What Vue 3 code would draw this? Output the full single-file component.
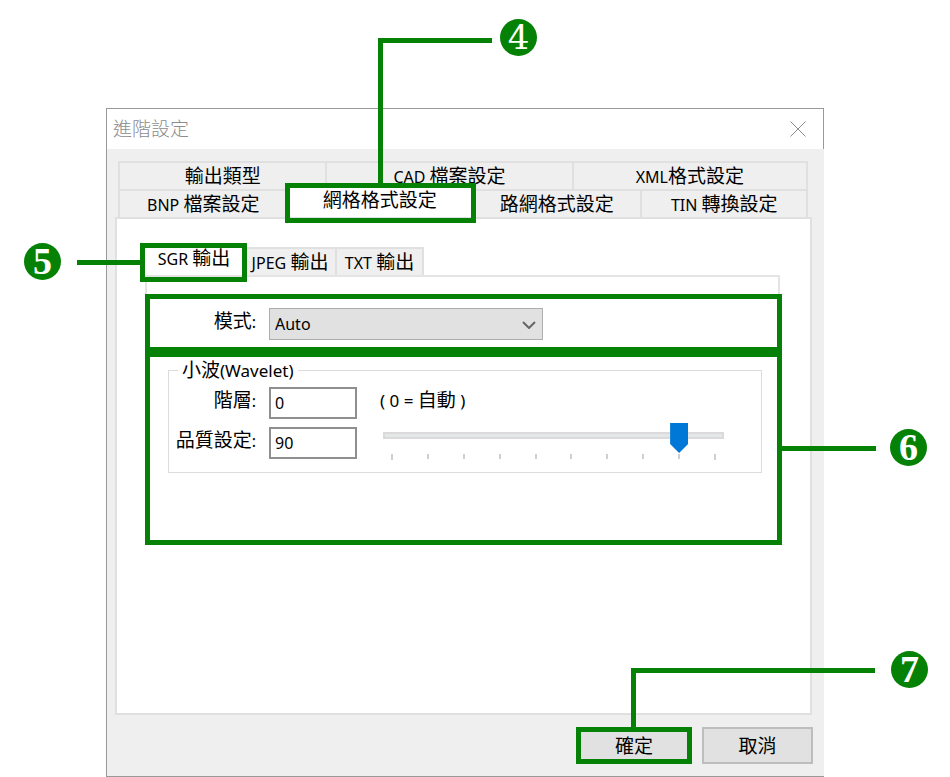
<template>
  <div class="page">
    <div class="dialog" role="dialog" aria-labelledby="dialog-title">
      <header class="title-bar">
        <h1 id="dialog-title">進階設定</h1>
        <button class="close" type="button" aria-label="關閉">
          <svg width="16" height="16" viewBox="0 0 16 16">
            <path d="M0.5 0.5L15.5 15.5M15.5 0.5L0.5 15.5" fill="none" stroke="#8c8c8c" />
          </svg>
        </button>
      </header>

      <!-- 外層分頁，共兩列 -->
      <nav class="tabs">
        <div class="tab-row first">
          <button v-for="tab in topTabs" :key="tab.name" class="tab" type="button">
            <span class="en">{{ tab.en }}</span>{{ tab.name }}
          </button>
        </div>
        <div class="tab-row second">
          <button
            v-for="tab in bottomTabs"
            :key="tab.name"
            class="tab"
            :class="{ active: tab.name === activeTab }"
            type="button"
            @click="activeTab = tab.name"
          >
            <span class="en">{{ tab.en }}</span>{{ tab.name }}
          </button>
          <!-- 標註 4 -->
          <div class="mark mark-tab">
            <span class="line v line-4v"></span>
            <span class="line h line-4h"></span>
            <span class="badge badge-4">4</span>
          </div>
        </div>
      </nav>

      <main class="panel">
        <!-- 內層分頁 -->
        <nav class="sub-tabs">
          <button
            v-for="tab in subTabs"
            :key="tab"
            class="tab"
            :class="{ active: tab === activeSubTab }"
            type="button"
            @click="activeSubTab = tab"
          >
            <span class="en">{{ tab }}&nbsp;</span>輸出
          </button>
          <!-- 標註 5 -->
          <div class="mark mark-sub">
            <span class="line h line-5"></span>
            <span class="badge badge-5">5</span>
          </div>
        </nav>

        <div class="sub-panel">
          <section class="box mode">
            <label for="mode">模式<span class="en">:</span></label>
            <div class="select">
              <select id="mode" v-model="mode">
                <option>Auto</option>
              </select>
              <svg width="14" height="8" viewBox="0 0 14 8">
                <path d="M1 1L7 7L13 1" fill="none" stroke="#666" stroke-width="2" />
              </svg>
            </div>
          </section>

          <section class="box wavelet">
            <fieldset>
              <legend>小波<span class="en">(Wavelet)</span></legend>
              <div class="fields">
                <label for="level">階層<span class="en">:</span></label>
                <input id="level" v-model="level" type="text" />
                <span class="hint"><span class="en">( 0 = </span>自動<span class="en"> )</span></span>

                <label for="quality">品質設定<span class="en">:</span></label>
                <input id="quality" v-model="quality" type="text" />
                <div class="slider">
                  <input v-model="quality" type="range" min="10" max="100" aria-label="品質設定" />
                  <div class="ticks">
                    <i v-for="n in 10" :key="n"></i>
                  </div>
                </div>
              </div>
            </fieldset>
            <!-- 標註 6 -->
            <span class="line h line-6"></span>
            <span class="badge badge-6">6</span>
          </section>
        </div>
      </main>

      <footer class="footer">
        <div class="ok-wrap">
          <button class="btn ok" type="button">確定</button>
          <!-- 標註 7 -->
          <span class="line v line-7v"></span>
          <span class="line h line-7h"></span>
          <span class="badge badge-7">7</span>
        </div>
        <button class="btn" type="button">取消</button>
      </footer>
    </div>
  </div>
</template>

<script setup>
import { ref } from 'vue'

// ========== 分頁資料 ==========
// en: 英數前綴，name: 中文名稱
const topTabs = [
  { en: '', name: '輸出類型' },
  { en: 'CAD\u00a0', name: '檔案設定' },
  { en: 'XML', name: '格式設定' }
]
const bottomTabs = [
  { en: 'BNP\u00a0', name: '檔案設定' },
  { en: '', name: '網格格式設定' },
  { en: '', name: '路網格式設定' },
  { en: 'TIN\u00a0', name: '轉換設定' }
]
const subTabs = ['SGR', 'JPEG', 'TXT']

// ========== 響應式狀態 ==========
const activeTab = ref('網格格式設定')
const activeSubTab = ref('SGR')
const mode = ref('Auto')
const level = ref('0')
const quality = ref('90')
</script>

<style>
body {
  background: #fff;
}
</style>

<style scoped>
* {
  box-sizing: border-box;
}
.page {
  display: flex;
  min-height: 100vh;
  padding: 108px 126px 0 106px;
  font-family: "Noto Sans", "Noto Sans CJK TC", sans-serif;
  font-size: 19px;
  line-height: 24px;
  color: #000;
}
button,
input,
select {
  margin: 0;
  border-radius: 0;
  font: inherit;
  color: inherit;
}
.en {
  font-size: 16px;
}
legend .en,
.hint .en {
  font-size: 17px;
}
.dialog {
  display: flex;
  flex: 1;
  flex-direction: column;
  min-width: 0;
  background: #efefef;
  border: 1px solid #999;
  border-right: 0;
}

/* 標題列 */
.title-bar {
  display: flex;
  align-items: center;
  justify-content: space-between;
  height: 40px;
  padding: 0 17px 0 6px;
  background: #fff;
  border-right: 1px solid #999;
}
h1 {
  margin: 0;
  font-size: 19px;
  font-weight: 300;
  color: #8c8c8c;
}
.close {
  display: flex;
  padding: 0;
  background: none;
  border: 0;
}

/* 分頁 */
.tabs {
  margin: 12px 16px 0 11px;
}
.tab-row {
  position: relative;
  display: grid;
  border-left: 2px solid #e0e0e0;
}
.first {
  grid-template-columns: 208fr 247fr 235fr;
}
.second {
  grid-template-columns: 169fr 185fr 170fr 166fr;
}
.tab {
  height: 28px;
  padding: 0;
  line-height: 24px;
  white-space: nowrap;
  background: #efefef;
  border: solid #e0e0e0;
  border-width: 2px 2px 0 0;
}
.tab.active {
  height: 32px;
  margin-top: -4px;
  padding-bottom: 4px;
  background: #fff;
  z-index: 1;
}
.panel {
  flex: 1;
  margin: 0 12px 0 8px;
  padding: 28px 30px 28px 28px;
  background: #fff;
  border: 2px solid #e0e0e0;
}
.sub-tabs {
  position: relative;
  display: flex;
}
.sub-tabs .tab {
  width: 87px;
}
.sub-tabs .tab:nth-child(1) {
  width: 100px;
}
.sub-tabs .tab:nth-child(2) {
  width: 92px;
}
.sub-panel {
  padding-top: 17px;
  border: solid #e4e4e4;
  border-width: 2px 2px 0;
}

/* 設定區塊 */
.box {
  position: relative;
  margin: 0 -4px 0 -2px;
  border: 5px solid #058205;
  background: #fff;
}
.mode {
  display: flex;
  align-items: center;
  gap: 13px;
  padding: 9px 0 7px;
}
label {
  padding-bottom: 6px;
  text-align: right;
}
.mode label {
  width: 106px;
}
.select {
  position: relative;
  width: 274px;
}
.select select {
  display: block;
  width: 100%;
  height: 32px;
  padding: 0 5px;
  font-size: 16px;
  appearance: none;
  background: #e1e1e1;
  border: 1px solid #adadad;
}
.select svg {
  position: absolute;
  top: 13px;
  right: 7px;
  pointer-events: none;
}
.wavelet {
  padding: 1px 15px 67px 18px;
}
fieldset {
  min-width: 0;
  margin: 0;
  padding: 4px 0 13px;
  border: 1px solid #dcdcdc;
}
legend {
  margin-left: 9px;
  padding: 0 4px;
}
.fields {
  display: grid;
  grid-template-columns: 87px 101px 1fr;
  row-gap: 8px;
  align-items: center;
}
.fields input[type="text"] {
  width: 88px;
  height: 32px;
  margin-left: 13px;
  padding: 0 4px;
  font-size: 16px;
  background: #fff;
  border: 2px solid #8f8f8f;
}
.hint {
  padding: 0 0 6px 23px;
  white-space: pre;
}

/* 滑桿 */
.slider {
  align-self: start;
  height: 32px;
  margin: -4px 37px 0 26px;
}
.slider input {
  display: block;
  width: 100%;
  height: 30px;
  appearance: none;
  background: none;
}
.slider input::-webkit-slider-runnable-track {
  height: 30px;
  background:
    linear-gradient(#e4e7e7, #e4e7e7) 2px 11px / calc(100% - 4px) 3px no-repeat,
    linear-gradient(#dadada, #dadada) 0 9px / 100% 7px no-repeat;
}
.slider input::-webkit-slider-thumb {
  width: 18px;
  height: 30px;
  appearance: none;
  background: #0078d7;
  clip-path: polygon(0 0, 100% 0, 100% 70%, 50% 100%, 0 70%);
}
.ticks {
  display: flex;
  justify-content: space-between;
  padding: 1px 8px 0;
}
.ticks i {
  width: 2px;
  height: 5px;
  background: #cfcfcf;
}
.ticks i:first-child,
.ticks i:last-child {
  height: 6px;
}

/* 底部按鈕 */
.footer {
  display: flex;
  justify-content: flex-end;
  gap: 10px;
  padding: 12px 11px;
}
.ok-wrap {
  position: relative;
}
.btn {
  display: block;
  width: 111px;
  height: 37px;
  padding: 0;
  background: #e1e1e1;
  border: 2px solid #bdbdbd;
}
.btn.ok {
  width: 116px;
  border: 5px solid #058205;
}

/* 標註框、連接線與編號 */
.mark {
  position: absolute;
  z-index: 2;
  border: 5px solid #058205;
  pointer-events: none;
}
.mark-tab {
  top: -6px;
  bottom: -6px;
  left: 24%;
  width: 191px;
}
.mark-sub {
  top: -4px;
  bottom: -7px;
  left: -5px;
  width: 107px;
}
.line {
  position: absolute;
  z-index: 2;
  background: #058205;
}
.line.h {
  height: 5px;
}
.line.v {
  width: 5px;
}
.badge {
  position: absolute;
  z-index: 2;
  width: 37px;
  height: 37px;
  border-radius: 50%;
  background: #058205;
  color: #fff;
  font-family: "Liberation Serif", serif;
  font-size: 38px;
  font-weight: 700;
  line-height: 37px;
  text-align: center;
}
.line-4v {
  bottom: 100%;
  left: 88px;
  height: 150px;
}
.line-4h {
  bottom: 175px;
  left: 88px;
  width: 114px;
}
.badge-4 {
  bottom: 162px;
  left: 210px;
  font-family: "DejaVu Serif", serif;
  font-size: 34px;
  font-weight: 400;
}
.line-5 {
  top: 12px;
  right: 100%;
  width: 68px;
}
.badge-5 {
  top: -5px;
  right: 181px;
}
.line-6 {
  top: 89px;
  left: 100%;
  width: 99px;
}
.badge-6 {
  top: 72px;
  right: -150px;
}
.line-7v {
  bottom: 100%;
  left: 55px;
  height: 59px;
}
.line-7h {
  bottom: 91px;
  left: 55px;
  width: 244px;
}
.badge-7 {
  bottom: 76px;
  left: 315px;
}
</style>
